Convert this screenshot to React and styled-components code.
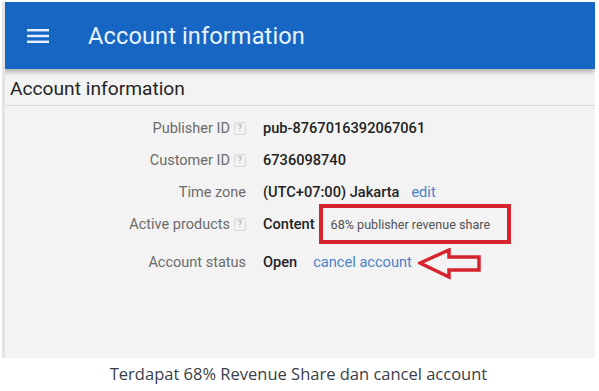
import React from "react";
import styled, { createGlobalStyle } from "styled-components";

const Global = createGlobalStyle`
  html, body { margin: 0; padding: 0; background: #ffffff; }
  body { font-family: Roboto, "Liberation Sans", Arial, sans-serif; }
`;

const Figure = styled.div`
  width: 599px;
  height: 391px;
  padding: 2px 4px 0 2px;
  box-sizing: border-box;
  display: flex;
  flex-direction: column;
`;

const Screen = styled.div`
  height: 356px;
  background: #f3f3f3;
  display: flex;
  flex-direction: column;
  border-left: 3px solid #e4e4e4;
  box-sizing: border-box;
  overflow: hidden;
`;

const AppBar = styled.header`
  height: 67px;
  margin-left: -3px;
  background: #1866c3;
  display: flex;
  align-items: center;
  padding-left: 25px;
  gap: 39px;
  box-shadow: 0 3px 5px rgba(0, 0, 0, 0.28);
  position: relative;
  z-index: 1;
  flex-shrink: 0;
`;

const Title = styled.h1`
  margin: 0;
  font-size: 23.6px;
  font-weight: 400;
  color: #e9f3ff;
  letter-spacing: 0.1px;
`;

const SubHeader = styled.div`
  height: 37px;
  display: flex;
  align-items: center;
  padding: 2px 0 0 5px;
  box-sizing: border-box;
  font-size: 19.2px;
  color: #262626;
  border-bottom: 1px solid #d9d9d9;
  flex-shrink: 0;
`;

const Rows = styled.div`
  display: grid;
  grid-template-columns: 241px 1fr;
  column-gap: 17px;
  padding-top: 6px;
`;

const Row = styled.div`
  display: contents;
`;

const Label = styled.div`
  height: ${(p) => p.$h || 32}px;
  display: flex;
  align-items: center;
  justify-content: flex-end;
  gap: 4px;
  font-size: 14.5px;
  color: #6b6b6b;
`;

const Value = styled.div`
  height: ${(p) => p.$h || 32}px;
  display: flex;
  align-items: center;
  font-size: 14.6px;
  font-weight: 500;
  color: #232323;
`;

const Help = styled.span`
  width: 10px;
  height: 11px;
  border: 1px solid #d6d6d6;
  border-radius: 2px;
  font-size: 9px;
  color: #a5a5a5;
  display: inline-flex;
  align-items: center;
  justify-content: center;
  font-weight: 400;
`;

const Link = styled.a`
  color: #4b82c7;
  font-weight: 400;
  margin-left: ${(p) => p.$ml || 10}px;
  text-decoration: none;
`;

const Highlight = styled.span`
  margin-left: 4px;
  width: 192px;
  height: 40px;
  box-sizing: border-box;
  border: 4px solid #d6232e;
  display: flex;
  align-items: center;
  padding-left: 8px;
  font-size: 12.6px;
  font-weight: 400;
  color: #545454;
  white-space: nowrap;
`;

const Arrow = styled.svg`
  margin-left: 6px;
  margin-top: 3px;
  flex-shrink: 0;
`;

const Caption = styled.div`
  margin-top: 4px;
  text-align: center;
  font-family: "Open Sans", "Liberation Sans", sans-serif;
  font-size: 16.5px;
  color: #3a3f4a;
`;

const Hamburger = () => (
  <svg width="22" height="14" viewBox="0 0 22 14">
    <rect x="0" y="0" width="22" height="2.4" fill="#e6f0ff" />
    <rect x="0" y="5.8" width="22" height="2.4" fill="#e6f0ff" />
    <rect x="0" y="11.6" width="22" height="2.4" fill="#e6f0ff" />
  </svg>
);

export default function App() {
  return (
    <>
      <Global />
      <Figure>
        <Screen>
          <AppBar>
            <Hamburger />
            <Title>Account information</Title>
          </AppBar>
          <SubHeader>Account information</SubHeader>
          <Rows>
            <Row>
              <Label>Publisher ID <Help>?</Help></Label>
              <Value>pub-8767016392067061</Value>
            </Row>
            <Row>
              <Label>Customer ID <Help>?</Help></Label>
              <Value>6736098740</Value>
            </Row>
            <Row>
              <Label>Time zone</Label>
              <Value>
                (UTC+07:00) Jakarta<Link $ml={12}>edit</Link>
              </Value>
            </Row>
            <Row>
              <Label>Active products <Help>?</Help></Label>
              <Value>
                Content
                <Highlight>68% publisher revenue share</Highlight>
              </Value>
            </Row>
            <Row>
              <Label $h={44}>Account status</Label>
              <Value $h={44}>
                Open<Link $ml={16}>cancel account</Link>
                <Arrow width="64" height="32" viewBox="0 0 64 32">
                  <path
                    d="M2 15 L31 2 L31 9 L61 9 L61 22 L31 22 L31 29 Z"
                    fill="none"
                    stroke="#d6232e"
                    strokeWidth="3.5"
                    strokeLinejoin="miter"
                  />
                </Arrow>
              </Value>
            </Row>
          </Rows>
        </Screen>
        <Caption>Terdapat 68% Revenue Share dan cancel account</Caption>
      </Figure>
    </>
  );
}
